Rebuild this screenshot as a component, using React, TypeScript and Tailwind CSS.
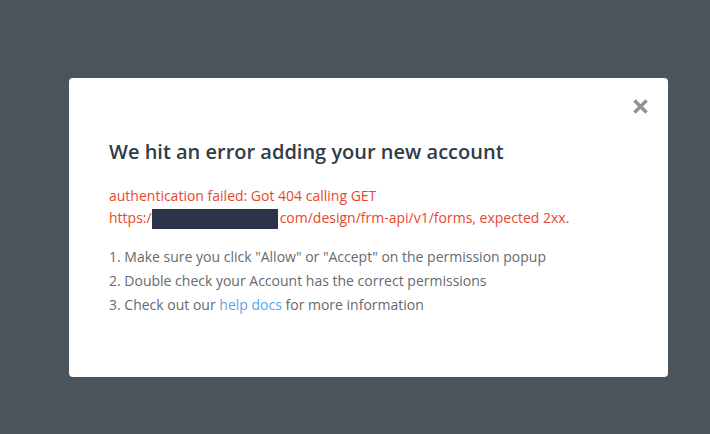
import React from "react";

export default function App() {
  return (
    <div
      className="w-[710px] h-[434px] bg-[#4a555b] pt-[78px] pl-[69px]"
      style={{ fontFamily: '"Open Sans", sans-serif' }}
    >
      <div className="relative w-[599px] h-[299px] bg-white rounded-[4px] px-[40px] pt-[60px]">
        <button className="absolute right-[17px] top-[17px] w-[22px] h-[22px] flex items-center justify-center">
          <svg width="17" height="17" viewBox="0 0 16 16">
            <path d="M2.3 2.3 L13.7 13.7 M13.7 2.3 L2.3 13.7" stroke="#8b9398" strokeWidth="3.2" strokeLinecap="butt" />
          </svg>
        </button>
        <h2 className="text-[20px] leading-[28px] font-semibold text-[#333b45]">
          We hit an error adding your new account
        </h2>
        <p className="mt-[19px] text-[14px] leading-[22px] text-[#e8472e]">
          authentication failed: Got 404 calling GET
          <br />
          https:/
          <span className="inline-block w-[126px] h-[20px] mr-[2px] bg-[#2b3449] align-[-6px]" />
          com/design/frm-api/v1/forms, expected 2xx.
        </p>
        <ol className="mt-[16px] text-[14px] leading-[24px] text-[#666a6e]">
          <li>1. Make sure you click "Allow" or "Accept" on the permission popup</li>
          <li>2. Double check your Account has the correct permissions</li>
          <li>
            3. Check out our <a className="text-[#5aa6ea]">help docs</a> for more information
          </li>
        </ol>
      </div>
    </div>
  );
}
